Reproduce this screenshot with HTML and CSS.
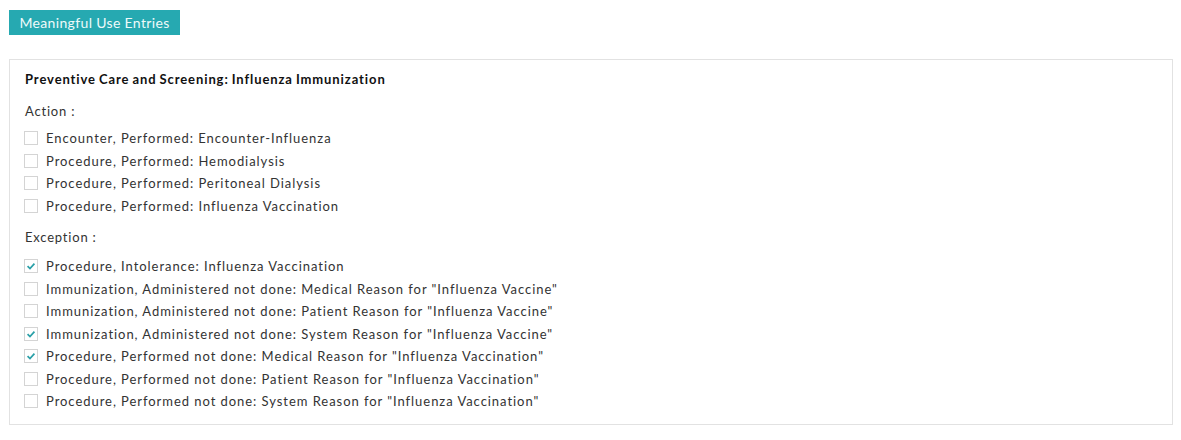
FILE: index.html
```html
<!DOCTYPE html>
<html>
<head>
<meta charset="utf-8">
<link rel="stylesheet" href="styles.css">
</head>
<body>
<div class="page">
  <button class="btn">Meaningful Use Entries</button>
  <div class="panel">
    <div class="title">Preventive Care and Screening: Influenza Immunization</div>
    <div class="group-label">Action :</div>
    <ul class="list">
      <li><span class="cb"></span>Encounter, Performed: Encounter-Influenza</li>
      <li><span class="cb"></span>Procedure, Performed: Hemodialysis</li>
      <li><span class="cb"></span>Procedure, Performed: Peritoneal Dialysis</li>
      <li><span class="cb"></span>Procedure, Performed: Influenza Vaccination</li>
    </ul>
    <div class="group-label exception">Exception :</div>
    <ul class="list">
      <li><span class="cb checked"><svg viewBox="0 0 14 14"><path d="M3 7.2 L5.8 10 L11 4.2"/></svg></span>Procedure, Intolerance: Influenza Vaccination</li>
      <li><span class="cb"></span>Immunization, Administered not done: Medical Reason for "Influenza Vaccine"</li>
      <li><span class="cb"></span>Immunization, Administered not done: Patient Reason for "Influenza Vaccine"</li>
      <li><span class="cb checked"><svg viewBox="0 0 14 14"><path d="M3 7.2 L5.8 10 L11 4.2"/></svg></span>Immunization, Administered not done: System Reason for "Influenza Vaccine"</li>
      <li><span class="cb checked"><svg viewBox="0 0 14 14"><path d="M3 7.2 L5.8 10 L11 4.2"/></svg></span>Procedure, Performed not done: Medical Reason for "Influenza Vaccination"</li>
      <li><span class="cb"></span>Procedure, Performed not done: Patient Reason for "Influenza Vaccination"</li>
      <li><span class="cb"></span>Procedure, Performed not done: System Reason for "Influenza Vaccination"</li>
    </ul>
  </div>
</div>
</body>
</html>
```
FILE: styles.css
```css
html, body {
  margin: 0;
  padding: 0;
  background: #fff;
}
body {
  font-family: Lato, "Open Sans", sans-serif;
  color: #333;
  font-size: 13px;
}
.page {
  padding: 10px 8px 0 9px;
  display: flex;
  flex-direction: column;
  align-items: flex-start;
}
.btn {
  font-family: Lato, sans-serif;
  font-size: 14px;
  letter-spacing: 0.35px;
  color: #eefafa;
  background: #26a9b1;
  border: none;
  height: 25px;
  padding: 0;
  width: 171px;
  margin: 0 0 24px 0;
  cursor: pointer;
}
.panel {
  align-self: stretch;
  border: 1px solid #e2e2e2;
  padding: 10px 15px 12px 15px;
  height: 342px;
}
.title {
  font-weight: bold;
  color: #111;
  font-size: 13px;
  letter-spacing: 0.9px;
  word-spacing: -1px;
  line-height: 18px;
  margin-bottom: 14px;
}
.group-label {
  line-height: 18px;
  margin-bottom: 7px;
  letter-spacing: 0.8px;
}
.group-label.exception {
  margin-bottom: 9px;
}
.list {
  list-style: none;
  margin: 0 0 11px 0;
  padding: 0;
}
.list li {
  display: flex;
  align-items: center;
  height: 22.5px;
  letter-spacing: 0.95px;
}
.cb {
  width: 12px;
  height: 12px;
  border: 1px solid #d4d4d4;
  margin: 0 8px 0 -1px;
  flex: none;
  display: flex;
  align-items: center;
  justify-content: center;
}
.cb svg {
  width: 14px;
  height: 14px;
}
.cb svg path {
  fill: none;
  stroke: #2aa0a8;
  stroke-width: 2;
}
```
